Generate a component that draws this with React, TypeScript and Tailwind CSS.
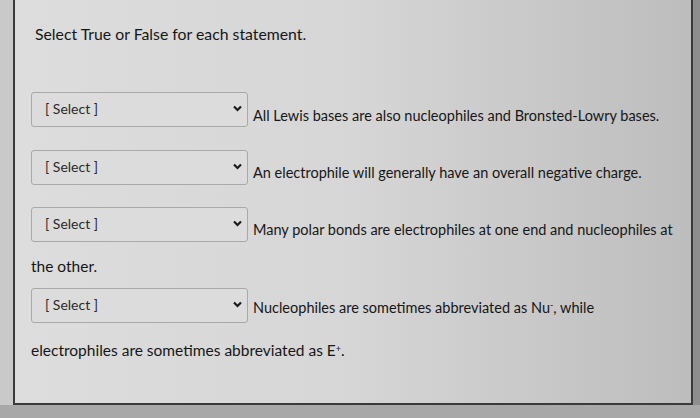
const rows = [
  { text: "All Lewis bases are also nucleophiles and Bronsted-Lowry bases.", more: null, gap: "mt-[48px]", drop: "pt-[13px]" },
  { text: "An electrophile will generally have an overall negative charge.", more: null, gap: "mt-[23px]", drop: "pt-[10px]" },
  { text: "Many polar bonds are electrophiles at one end and nucleophiles at", more: "the other.", gap: "mt-[22px]", drop: "pt-[10px]" },
];

function Chevron() {
  return (
    <svg width="9" height="7" viewBox="0 0 9 7" className="shrink-0">
      <path d="M1 1.5 L4.5 5 L8 1.5" fill="none" stroke="#1a1a1a" strokeWidth="2.2" />
    </svg>
  );
}

function SelectBox() {
  return (
    <div className="flex h-[35px] w-[217px] shrink-0 items-center justify-between rounded-[3px] border border-[#a9a9a9] bg-[#dcdcdc] pb-[2px] pl-[13px] pr-[5px] text-[14px] text-[#2a2a2a]">
      <span>[ Select ]</span>
      <Chevron />
    </div>
  );
}

export default function App() {
  return (
    <div className="flex h-[418px] w-[700px] flex-col bg-[#a8a8a8] font-['Lato','Liberation_Sans',sans-serif]">
      <div className="flex h-[405px]">
        <div className="w-[13px] shrink-0 bg-[#c9c9c9]" />
        <div className="flex w-[680px] flex-col border-x-2 border-b-2 border-[#3a3a3a] bg-gradient-to-r from-[#dddddd] via-[#d6d6d6] to-[#bdbdbd] pl-[16px] pt-[24px] text-[#161616]">
          <div className="pl-[4px] text-[15.8px] leading-[20px]">Select True or False for each statement.</div>
          {rows.map((r) => (
            <div key={r.text} className={r.gap}>
              <div className="flex items-center gap-[5px]">
                <SelectBox />
                <span className={`${r.drop} text-[14.5px]`}>{r.text}</span>
              </div>
              {r.more && <div className="mt-[14px] text-[15.5px] leading-[20px]">{r.more}</div>}
            </div>
          ))}
          <div className="mt-[12px]">
            <div className="flex items-center gap-[5px]">
              <SelectBox />
              <span className="pt-[4px] text-[14.5px]">
                Nucleophiles are sometimes abbreviated as Nu<sup className="text-[9px]">-</sup>, while
              </span>
            </div>
            <div className="mt-[17px] text-[15.5px] leading-[20px]">
              electrophiles are sometimes abbreviated as E<sup className="text-[9px]">+</sup>.
            </div>
          </div>
        </div>
        <div className="flex-1 bg-[#8e8e8e]" />
      </div>
    </div>
  );
}
